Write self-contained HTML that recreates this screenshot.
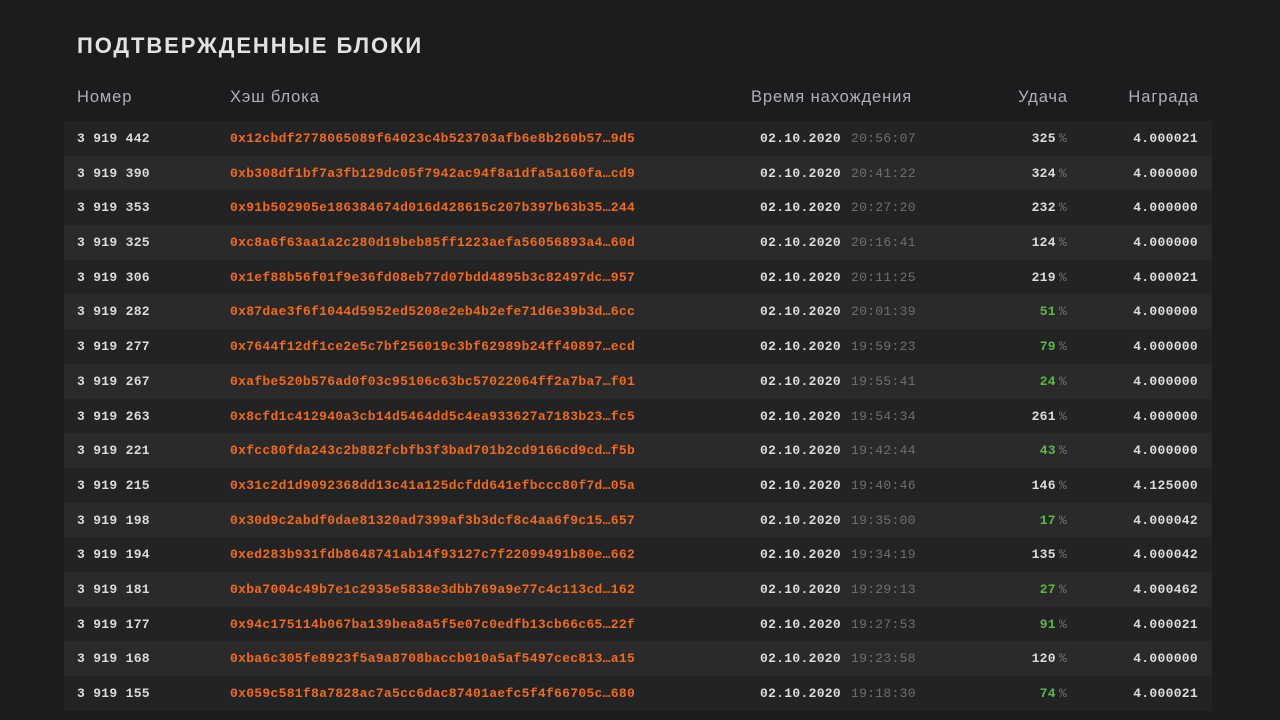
<!DOCTYPE html><html><head><meta charset="utf-8"><style>
body{margin:0;background:#1b1c1e;width:1280px;height:720px;overflow:hidden;font-family:"Liberation Sans","DejaVu Sans",sans-serif}
h1{position:absolute;left:77px;top:33px;margin:0;font-size:22px;font-weight:bold;color:#e2e2e2;letter-spacing:1.9px}
.hd{position:absolute;top:88px;font-size:16.5px;color:#aeb0b3;letter-spacing:.9px;white-space:nowrap}
.t{position:absolute;left:64px;top:121px;width:1148px}
.r{height:34.7px;position:relative;font-family:"Liberation Mono","DejaVu Sans Mono",monospace;font-size:13px;font-weight:bold;letter-spacing:.3px;line-height:35.5px;color:#dcdcdc}
.r:nth-child(odd){background:#222325}.r:nth-child(even){background:#2a2a2b}
.r span{position:absolute;white-space:nowrap}
.n{left:13px}.h{left:166px;color:#f26a1b}.d{left:696px}.tm{left:787px;color:#6e6f71;font-weight:normal}
.u{right:145px}.u i{font-style:normal;color:#6e6f71;font-weight:normal;margin-left:3px}.g{color:#5cb944}
.w{right:14px}
</style></head><body>
<h1>ПОДТВЕРЖДЕННЫЕ БЛОКИ</h1>
<div class="hd" style="left:77px">Номер</div>
<div class="hd" style="left:230px">Хэш блока</div>
<div class="hd" style="left:751px">Время нахождения</div>
<div class="hd" style="right:212px">Удача</div>
<div class="hd" style="right:81px">Награда</div>
<div class="t">
<div class="r"><span class="n">3 919 442</span><span class="h">0x12cbdf2778065089f64023c4b523703afb6e8b260b57…9d5</span><span class="d">02.10.2020</span><span class="tm">20:56:07</span><span class="u">325<i>%</i></span><span class="w">4.000021</span></div>
<div class="r"><span class="n">3 919 390</span><span class="h">0xb308df1bf7a3fb129dc05f7942ac94f8a1dfa5a160fa…cd9</span><span class="d">02.10.2020</span><span class="tm">20:41:22</span><span class="u">324<i>%</i></span><span class="w">4.000000</span></div>
<div class="r"><span class="n">3 919 353</span><span class="h">0x91b502905e186384674d016d428615c207b397b63b35…244</span><span class="d">02.10.2020</span><span class="tm">20:27:20</span><span class="u">232<i>%</i></span><span class="w">4.000000</span></div>
<div class="r"><span class="n">3 919 325</span><span class="h">0xc8a6f63aa1a2c280d19beb85ff1223aefa56056893a4…60d</span><span class="d">02.10.2020</span><span class="tm">20:16:41</span><span class="u">124<i>%</i></span><span class="w">4.000000</span></div>
<div class="r"><span class="n">3 919 306</span><span class="h">0x1ef88b56f01f9e36fd08eb77d07bdd4895b3c82497dc…957</span><span class="d">02.10.2020</span><span class="tm">20:11:25</span><span class="u">219<i>%</i></span><span class="w">4.000021</span></div>
<div class="r"><span class="n">3 919 282</span><span class="h">0x87dae3f6f1044d5952ed5208e2eb4b2efe71d6e39b3d…6cc</span><span class="d">02.10.2020</span><span class="tm">20:01:39</span><span class="u g">51<i>%</i></span><span class="w">4.000000</span></div>
<div class="r"><span class="n">3 919 277</span><span class="h">0x7644f12df1ce2e5c7bf256019c3bf62989b24ff40897…ecd</span><span class="d">02.10.2020</span><span class="tm">19:59:23</span><span class="u g">79<i>%</i></span><span class="w">4.000000</span></div>
<div class="r"><span class="n">3 919 267</span><span class="h">0xafbe520b576ad0f03c95106c63bc57022064ff2a7ba7…f01</span><span class="d">02.10.2020</span><span class="tm">19:55:41</span><span class="u g">24<i>%</i></span><span class="w">4.000000</span></div>
<div class="r"><span class="n">3 919 263</span><span class="h">0x8cfd1c412940a3cb14d5464dd5c4ea933627a7183b23…fc5</span><span class="d">02.10.2020</span><span class="tm">19:54:34</span><span class="u">261<i>%</i></span><span class="w">4.000000</span></div>
<div class="r"><span class="n">3 919 221</span><span class="h">0xfcc80fda243c2b882fcbfb3f3bad701b2cd9166cd9cd…f5b</span><span class="d">02.10.2020</span><span class="tm">19:42:44</span><span class="u g">43<i>%</i></span><span class="w">4.000000</span></div>
<div class="r"><span class="n">3 919 215</span><span class="h">0x31c2d1d9092368dd13c41a125dcfdd641efbccc80f7d…05a</span><span class="d">02.10.2020</span><span class="tm">19:40:46</span><span class="u">146<i>%</i></span><span class="w">4.125000</span></div>
<div class="r"><span class="n">3 919 198</span><span class="h">0x30d9c2abdf0dae81320ad7399af3b3dcf8c4aa6f9c15…657</span><span class="d">02.10.2020</span><span class="tm">19:35:00</span><span class="u g">17<i>%</i></span><span class="w">4.000042</span></div>
<div class="r"><span class="n">3 919 194</span><span class="h">0xed283b931fdb8648741ab14f93127c7f22099491b80e…662</span><span class="d">02.10.2020</span><span class="tm">19:34:19</span><span class="u">135<i>%</i></span><span class="w">4.000042</span></div>
<div class="r"><span class="n">3 919 181</span><span class="h">0xba7004c49b7e1c2935e5838e3dbb769a9e77c4c113cd…162</span><span class="d">02.10.2020</span><span class="tm">19:29:13</span><span class="u g">27<i>%</i></span><span class="w">4.000462</span></div>
<div class="r"><span class="n">3 919 177</span><span class="h">0x94c175114b067ba139bea8a5f5e07c0edfb13cb66c65…22f</span><span class="d">02.10.2020</span><span class="tm">19:27:53</span><span class="u g">91<i>%</i></span><span class="w">4.000021</span></div>
<div class="r"><span class="n">3 919 168</span><span class="h">0xba6c305fe8923f5a9a8708baccb010a5af5497cec813…a15</span><span class="d">02.10.2020</span><span class="tm">19:23:58</span><span class="u">120<i>%</i></span><span class="w">4.000000</span></div>
<div class="r"><span class="n">3 919 155</span><span class="h">0x059c581f8a7828ac7a5cc6dac87401aefc5f4f66705c…680</span><span class="d">02.10.2020</span><span class="tm">19:18:30</span><span class="u g">74<i>%</i></span><span class="w">4.000021</span></div>
</div>
</body></html>
